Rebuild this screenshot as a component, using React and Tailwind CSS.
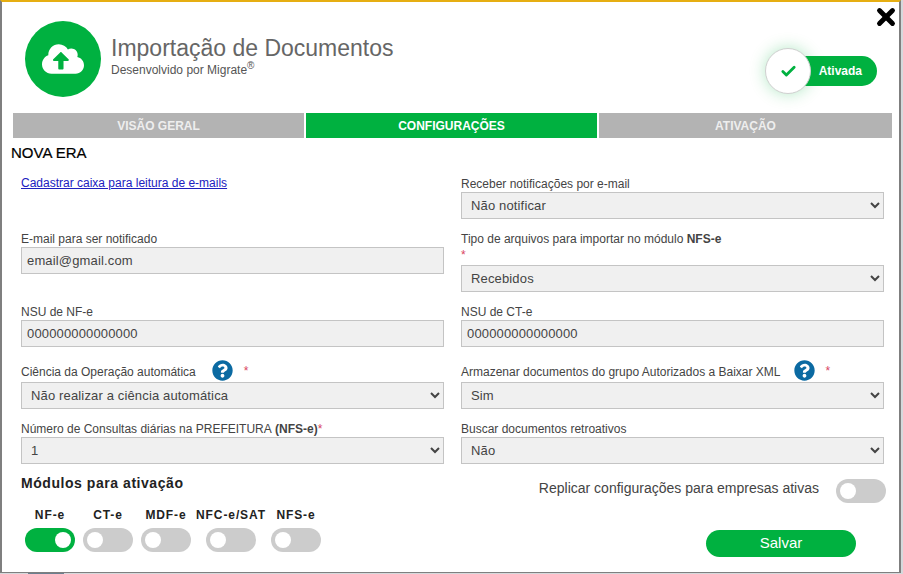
import React from "react";
import { FaCloudUploadAlt, FaQuestionCircle } from "react-icons/fa";
import { Check, X } from "lucide-react";

const Toggle = ({ on }) => (
  <div className={`flex h-6 w-[50px] items-center rounded-full px-1 ${on ? "justify-end bg-[#00b140]" : "justify-start bg-[#ccc]"}`}>
    <div className="h-4 w-4 rounded-full bg-white" />
  </div>
);

const Star = () => <span className="ml-[11px] text-[12px] text-[#d9455f]">*</span>;

const Label = ({ children, className = "h-4" }) => (
  <label className={`flex items-center text-[12px] leading-4 text-[#444] ${className}`}>{children}</label>
);

const Select = ({ value }) => (
  <select
    defaultValue={value}
    className="h-[27px] w-full border border-[#c4c4c4] bg-[#f0f0f0] pl-[5px] text-[13px] tracking-[0.15px] text-[#444] outline-none"
  >
    <option>{value}</option>
  </select>
);

const Input = ({ value }) => (
  <input
    readOnly
    value={value}
    className="h-[27px] w-full border border-[#c4c4c4] bg-[#f0f0f0] px-[5px] text-[13px] tracking-[0.15px] text-[#444] outline-none"
  />
);

const modules = [
  { name: "NF-e", width: "w-[58px]", on: true },
  { name: "CT-e", width: "w-[58px]" },
  { name: "MDF-e", width: "w-[58px]" },
  { name: "NFC-e/SAT", width: "w-[72px]" },
  { name: "NFS-e", width: "w-[58px]" },
];

export default function App() {
  return (
    <div className="h-[574px] w-[903px] overflow-hidden bg-[#d5d9dc] font-['Liberation_Sans',Arial,sans-serif]">
      <div className="relative h-[573px] w-[901px] border-x-2 border-t-2 border-b border-x-[#7f7f7f] border-t-[#e6ae12] border-b-[#7f7f7f] bg-white">
        <button className="absolute right-0 top-[2px] text-black">
          <X size={26} strokeWidth={4.5} />
        </button>

        <header className="flex h-[111px] items-start pl-[23px] pt-[19px]">
          <div className="flex h-[76px] w-[76px] items-center justify-center rounded-full bg-[#00b140]">
            <FaCloudUploadAlt size={42} className="text-white" />
          </div>
          <div className="ml-[10px] mt-[12px]">
            <h1 className="text-[23px] leading-[30px] text-[#666]">Importação de Documentos</h1>
            <p className="text-[12px] leading-[14px] text-[#555]">
              Desenvolvido por Migrate<sup className="text-[10px]">®</sup>
            </p>
          </div>
          <div className="ml-auto mr-[22px] mt-[27px] flex h-[46px] w-[112px] items-center">
            <div className="relative z-10 flex h-[46px] w-[46px] items-center justify-center rounded-full border border-[#d0d0d0] bg-white shadow-[0_0_16px_rgba(0,177,64,0.3)]">
              <Check size={17} strokeWidth={4} className="text-[#00b140]" />
            </div>
            <div className="-ml-[20px] flex h-[30px] flex-1 items-center justify-end rounded-r-full bg-[#00b140] pr-[15px] text-[12px] font-bold text-white">
              Ativada
            </div>
          </div>
        </header>

        <nav className="mx-[11px] flex h-[25px] w-[879px] gap-[2px] text-[12px] font-bold text-white">
          <div className="flex w-[291px] items-center justify-center bg-[#b3b3b3] text-[#eee]">VISÃO GERAL</div>
          <div className="flex w-[291px] items-center justify-center bg-[#00b140]">CONFIGURAÇÕES</div>
          <div className="flex flex-1 items-center justify-center bg-[#b3b3b3] text-[#eee]">ATIVAÇÃO</div>
        </nav>

        <h2 className="ml-[9px] mt-[7px] text-[15px] leading-4 text-black [-webkit-text-stroke:0.2px_black]">NOVA ERA</h2>

        <div className="mx-[19px] mt-[15px] grid grid-cols-[423px_423px] gap-x-[17px] gap-y-3">
          <div className="-mt-[2px] leading-4">
            <a href="#" className="text-[12px] leading-4 text-[#2020c0] underline">Cadastrar caixa para leitura de e-mails</a>
          </div>
          <div>
            <Label>Receber notificações por e-mail</Label>
            <Select value="Não notificar" />
          </div>

          <div>
            <Label>E-mail para ser notificado</Label>
            <Input value="email@gmail.com" />
          </div>
          <div>
            <Label>Tipo de arquivos para importar no módulo&nbsp;<b>NFS-e</b></Label>
            <div className="h-[18px] text-[12px] leading-4 text-[#d9455f]">*</div>
            <Select value="Recebidos" />
          </div>

          <div>
            <Label>NSU de NF-e</Label>
            <Input value="000000000000000" />
          </div>
          <div>
            <Label>NSU de CT-e</Label>
            <Input value="000000000000000" />
          </div>

          <div>
            <Label className="h-[23px]">
              <span className="pt-[3px]">Ciência da Operação automática</span>
              <FaQuestionCircle size={21} className="ml-[16px] text-[#0b6aa2]" />
              <Star />
            </Label>
            <Select value="Não realizar a ciência automática" />
          </div>
          <div>
            <Label className="h-[23px]">
              <span className="pt-[3px]">Armazenar documentos do grupo Autorizados a Baixar XML</span>
              <FaQuestionCircle size={21} className="ml-[13px] text-[#0b6aa2]" />
              <Star />
            </Label>
            <Select value="Sim" />
          </div>

          <div>
            <Label>Número de Consultas diárias na PREFEITURA&nbsp;<b>(NFS-e)</b><span className="text-[#d9455f]">*</span></Label>
            <Select value="1" />
          </div>
          <div>
            <Label>Buscar documentos retroativos</Label>
            <Select value="Não" />
          </div>
        </div>

        <div className="mt-[10px] flex">
          <div className="ml-[19px]">
            <h3 className="text-[14px] font-bold leading-[18px] tracking-[0.55px] text-[#222]">Módulos para ativação</h3>
            <div className="mt-[15px] flex">
              {modules.map((m) => (
                <div key={m.name} className={`flex flex-col items-center ${m.width}`}>
                  <span className="whitespace-nowrap text-[12px] font-bold leading-4 tracking-[0.9px] text-[#222]">{m.name}</span>
                  <div className="mt-[5px]"><Toggle on={m.on} /></div>
                </div>
              ))}
            </div>
          </div>
          <div className="ml-auto mr-[13px] flex flex-col items-end pt-[4px]">
            <div className="flex items-center gap-[17px]">
              <span className="pb-[4px] text-[14px] text-[#444]">Replicar configurações para empresas ativas</span>
              <Toggle />
            </div>
            <button className="mr-[30px] mt-[27px] h-[27px] w-[150px] rounded-[14px] bg-[#00b140] text-[15px] text-white">Salvar</button>
          </div>
        </div>
      </div>
      <div className="ml-[28px] h-px w-9 bg-[#6b7f8f]" />
    </div>
  );
}
